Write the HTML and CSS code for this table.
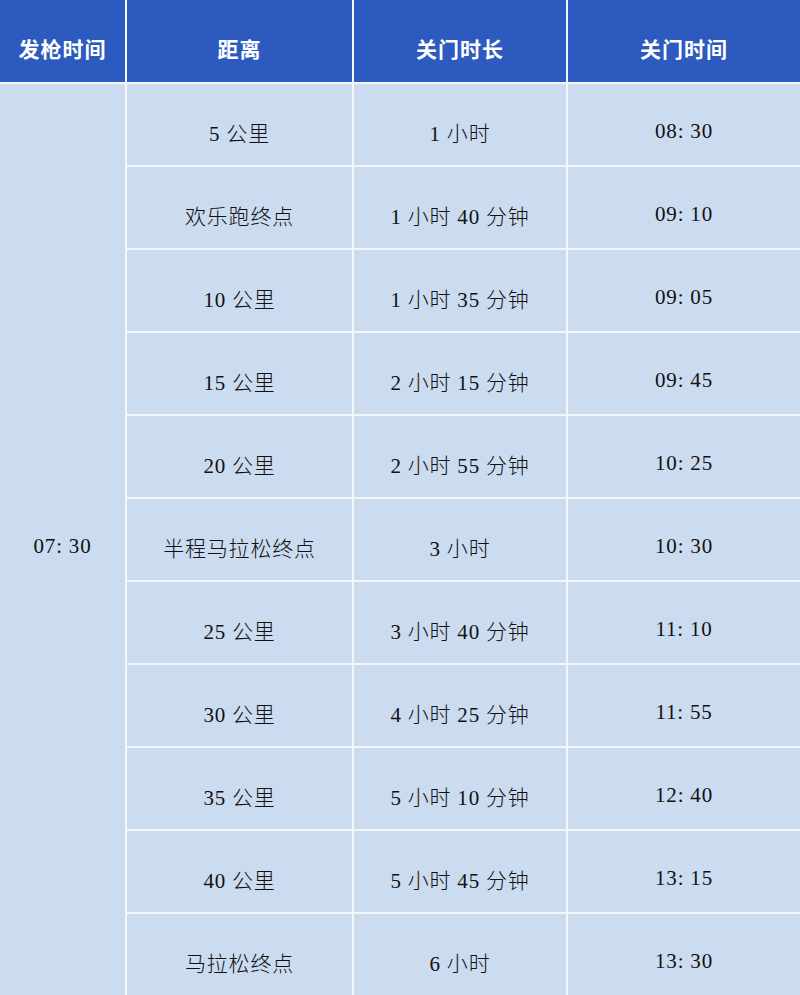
FILE: index.html
```html
<!DOCTYPE html>
<html lang="zh-CN">
<head>
<meta charset="utf-8">
<title>关门时间</title>
<link rel="stylesheet" href="styles.css">
</head>
<body>
<div class="table">
  <div class="cell head">发枪时间</div>
  <div class="cell head">距离</div>
  <div class="cell head">关门时长</div>
  <div class="cell head">关门时间</div>

  <div class="cell start">07: 30</div>

  <div class="cell">5 公里</div><div class="cell">1 小时</div><div class="cell">08: 30</div>
  <div class="cell">欢乐跑终点</div><div class="cell">1 小时 40 分钟</div><div class="cell">09: 10</div>
  <div class="cell">10 公里</div><div class="cell">1 小时 35 分钟</div><div class="cell">09: 05</div>
  <div class="cell">15 公里</div><div class="cell">2 小时 15 分钟</div><div class="cell">09: 45</div>
  <div class="cell">20 公里</div><div class="cell">2 小时 55 分钟</div><div class="cell">10: 25</div>
  <div class="cell">半程马拉松终点</div><div class="cell">3 小时</div><div class="cell">10: 30</div>
  <div class="cell">25 公里</div><div class="cell">3 小时 40 分钟</div><div class="cell">11: 10</div>
  <div class="cell">30 公里</div><div class="cell">4 小时 25 分钟</div><div class="cell">11: 55</div>
  <div class="cell">35 公里</div><div class="cell">5 小时 10 分钟</div><div class="cell">12: 40</div>
  <div class="cell">40 公里</div><div class="cell">5 小时 45 分钟</div><div class="cell">13: 15</div>
  <div class="cell">马拉松终点</div><div class="cell">6 小时</div><div class="cell">13: 30</div>
</div>
</body>
</html>
```

FILE: styles.css
```css
html, body {
  margin: 0;
  padding: 0;
  background: #ffffff;
}

.table {
  width: 800px;
  height: 995px;
  display: grid;
  grid-template-columns: 125px 225px 212px 1fr;
  grid-template-rows: 82px repeat(11, 81px);
  gap: 2px;
  background: #f3f6fb;
  overflow: hidden;
}

.cell {
  display: flex;
  align-items: center;
  justify-content: center;
  padding-top: 14px;
  box-sizing: border-box;
  background: #cbdbf0;
  color: #111111;
  font-family: "Liberation Serif", "Noto Sans CJK SC", serif;
  font-size: 21px;
  font-weight: 300;
  letter-spacing: 0.8px;
}

.head {
  background: #2c5abf;
  color: #ffffff;
  font-family: "Noto Sans CJK SC", "Noto Sans", sans-serif;
  font-weight: 700;
  font-size: 21px;
  letter-spacing: 1px;
  padding-top: 14px;
}

.start {
  grid-column: 1;
  grid-row: 2 / span 11;
}
```
